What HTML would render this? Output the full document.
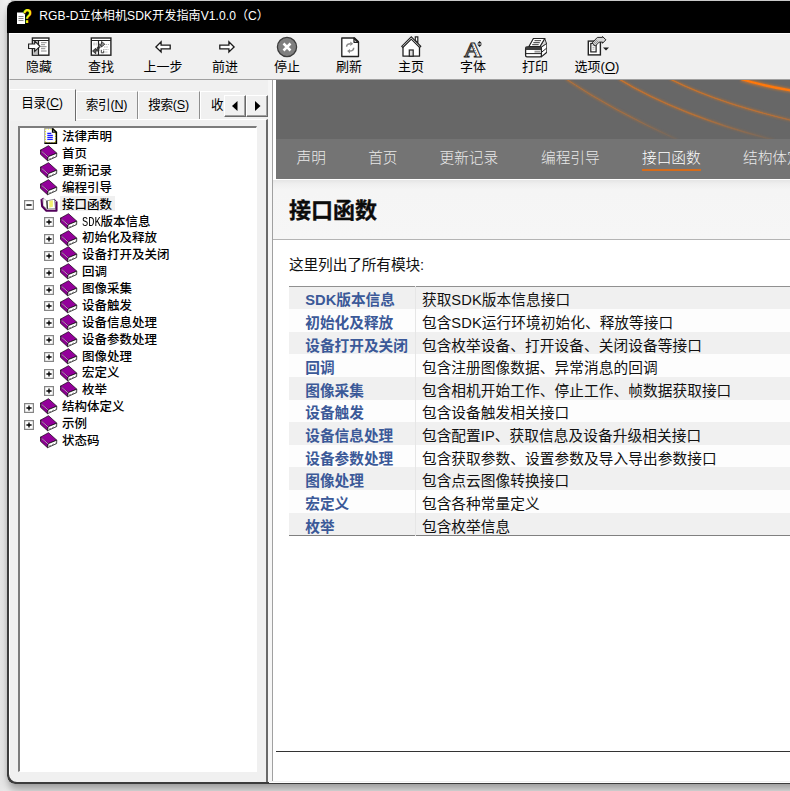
<!DOCTYPE html>
<html lang="zh-CN">
<head>
<meta charset="utf-8">
<title>RGB-D立体相机SDK开发指南V1.0.0 (C)</title>
<style>
*{box-sizing:border-box;margin:0;padding:0}
html,body{width:790px;height:791px;overflow:hidden;background:#f6f6f6}
body{position:relative;font-family:"Liberation Sans","Noto Sans CJK SC",sans-serif;font-size:12px;color:#000}
#bg{position:absolute;left:0;top:0;width:790px;height:791px;background:linear-gradient(90deg,#e7e7e7,#f0f0f0 7px,#f0f0f0)}
#win{position:absolute;left:7px;top:1px;width:800px;height:782.500px;background:#f0f0f0;border-radius:8px 8px 8px 8px;overflow:hidden}
#inner{position:absolute;left:2px;top:1px;width:798px;height:779px}
#bredge{position:absolute;left:262px;top:780.500px;width:540px;height:1px;background:#fff;z-index:21}
#toprow{position:absolute;left:11px;top:0;width:779px;height:1px;background:#c9c9c9}
#edge{position:absolute;left:0;top:32px;width:800px;height:750.500px;border-radius:0 0 0 8px;box-shadow:inset 2px -2px 0 0 #3c3c3c;z-index:20;pointer-events:none}
#wsh{position:absolute;left:7px;top:1px;width:800px;height:782px;border-radius:8px;box-shadow:0 8px 10px -1px rgba(0,0,0,.34),0 0 4px 0 rgba(0,0,0,.10)}
#title{position:absolute;left:-2px;top:-1px;width:801px;height:32px;background:#000;color:#fff}
#title .txt{position:absolute;left:32.3px;top:0;height:32px;line-height:31px;font-size:12.1px;white-space:nowrap;letter-spacing:.05px}
#title svg{position:absolute;left:9px;top:6px;width:17px;height:18px}
#toolbar{position:absolute;left:0;top:31px;width:800px;height:47px;background:#f0f0f0;border-top:1px solid #fff;border-left:1px solid #fff;border-bottom:1px solid #a0a0a0}
.tb{position:absolute;top:0;width:62px;height:46px;text-align:center}
.tb svg{position:absolute;left:19px;top:.7px;width:24px;height:24px}
.tb span{position:absolute;left:-10px;right:-10px;top:24px;height:18px;line-height:18px;font-size:13px;white-space:nowrap;color:#000}
u{text-decoration:underline;text-underline-offset:1.5px;text-decoration-thickness:1px}
/* left pane */
#left{position:absolute;left:0;top:78px;width:259px;height:701px;background:#f0f0f0;border-left:1px solid #fff}
.tab{position:absolute;top:11px;height:28px;line-height:27px;font-size:12.600px;letter-spacing:-.25px;text-align:center;border-top:1px solid #fff;border-right:1px solid #8e8e8e;white-space:nowrap;background:#f0f0f0;box-shadow:inset 1px 0 0 #fff}
.tab.sel{top:8.500px;height:32px;line-height:27px;background:#f2f2f2;z-index:2;border-right:1px solid #6c6c6c}
#tabpane{position:absolute;left:-1px;top:39px;width:259px;height:664px;border-top:1px solid #fff;border-right:2px solid #6a6a6a}
#tree{position:absolute;left:8px;top:46px;width:239px;height:646px;background:#fff;border-right:1px solid #fff;border-bottom:1px solid #fff;border-top:2px solid #7c7c7c;border-left:2px solid #7c7c7c;overflow:hidden}
.row{position:absolute;left:0;height:17px;line-height:17px;font-size:12.5px;white-space:nowrap;color:#000;font-weight:500}
.ti{position:absolute;width:18px;height:17px}
.ti svg{width:18px;height:17px;display:block}
.bx{position:absolute;width:10px;height:10px}
.selbg{position:absolute;width:55px;height:15.600px;background:#f0f0f0}
.mono{font-family:"Liberation Mono",monospace;font-size:13px;display:inline-block;transform:scaleX(.8);transform-origin:0 50%;margin-right:-4.900px;line-height:17px;vertical-align:top}
#spin{position:absolute;left:214px;top:15px;width:44px;height:22px;z-index:3}
.sb{position:absolute;top:0;width:22px;height:22px;background:#f0f0f0;border-top:1px solid #fff;border-left:1px solid #fff;border-right:1px solid #696969;border-bottom:1px solid #696969;box-shadow:inset -1px -1px 0 #a0a0a0}
.sb svg{width:20px;height:20px;display:block}
/* right pane */
#split{position:absolute;left:259px;top:78px;width:5px;height:701px;background:#f6f6f6;border-right:1px solid #a0a0a0}
#right{position:absolute;left:264px;top:78px;width:540px;height:701px;background:#fff;overflow:hidden}
#doc{position:absolute;left:3px;top:0;width:531px;height:703px}
#banner{position:absolute;left:0;top:0;width:531px;height:60px;background:#676767}
#nav{position:absolute;left:0;top:59px;width:531px;height:40px;background:#747474}
#nav span{position:absolute;top:1px;height:39px;line-height:37px;font-size:14.67px;color:#e9e9e9;font-weight:300;white-space:nowrap}
#nav span.act{color:#fff}
#nav span.act:after{content:"";position:absolute;left:0;right:0;top:29px;height:2px;background:#d56c1c}
#hd{position:absolute;left:-3px;top:99px;width:534px;height:61.300px;background:linear-gradient(#fff,#fff 1px,#e6e6e6 1.500px,#efefef 5px,#f5f5f5 11px,#f6f6f6);border-bottom:1px solid #b4b4b4}
#hd h1{position:absolute;left:16px;top:15.300px;font-size:22px;font-weight:bold;line-height:34px;white-space:nowrap;color:#0c0c0c;-webkit-text-stroke:.35px #0c0c0c}
#intro{position:absolute;left:13px;top:175px;font-size:14.67px;line-height:20px;white-space:nowrap;color:#111;letter-spacing:-.1px}
table{position:absolute;left:13px;top:205.500px;width:540px;border-collapse:collapse;border-top:1.500px solid #909090;border-bottom:1px solid #808080;font-size:14.67px}
td{height:22.64px;line-height:16.800px;padding:5.800px 0 0 0;white-space:nowrap;color:#111;vertical-align:top}
tr:nth-child(odd) td{background:#f0f0f0}
tr:nth-child(even) td{background:#fdfdfd}
td.k{width:126px;padding-left:16.300px;font-weight:bold;color:#3b5998;border-right:1px solid #e6e6e6}
td.v{padding-left:6.400px;letter-spacing:.08px}
#foot{position:absolute;left:0;top:671px;width:531px;height:1px;background:#333}
</style>
</head>
<body>
<div id="bg"></div>
<div id="wsh"></div><div id="toprow"></div>
<div id="win"><div id="inner">
 <div id="title"><svg viewBox="0 0 17 18"><path d="M1 5.500h6l2 2V17H1z" fill="#fff"/><path d="M2.500 9.500h5M2.500 11.500h5M2.500 13.500h5" stroke="#888" stroke-width="1"/><text x="11.300" y="16.200" text-anchor="middle" font-family="Liberation Sans,sans-serif" font-weight="bold" font-size="20" fill="#f5ee10" textLength="9.500" lengthAdjust="spacingAndGlyphs">?</text></svg><span class="txt">RGB-D立体相机SDK开发指南V1.0.0（C）</span></div>
 <div id="toolbar">
<div class="tb" style="left:-2px"><svg viewBox="0 0 24 24"><rect x="5.400" y="3" width="16.500" height="17.200" fill="#fff" stroke="#222" stroke-width="1.400"/><path d="M5.400 5.500h16.500" stroke="#222" stroke-width="1.100"/><rect x="6.200" y="6.200" width="4.800" height="13.300" fill="#bdbdbd"/><line x1="11.500" y1="5.500" x2="11.500" y2="20" stroke="#222" stroke-width="1.200"/><path d="M14 7.700h5.600M14 9.700h4M14 11.700h5.600M14 13.700h4.300M14 16h5.600" stroke="#8a8a8a" stroke-width="1"/><path d="M1.600 9h6.100V6.200l5.300 5.100 -5.300 5.200v-3H1.600z" fill="#fff" stroke="#222" stroke-width="1.150" stroke-linejoin="miter"/></svg><span>隐藏</span></div>
<div class="tb" style="left:60px"><svg viewBox="0 0 24 24"><rect x="2.300" y="3" width="19.600" height="17.200" fill="#fff" stroke="#222" stroke-width="1.400"/><path d="M2.300 5.500h19.600" stroke="#222" stroke-width="1.100"/><line x1="9.500" y1="5.500" x2="9.500" y2="20" stroke="#222" stroke-width="1.200"/><path d="M4.300 8.200h3.500M4.300 9.800h3.500M16.500 9.500h3.500M15 12h4.500M14 14.500h5.500M14 17h5" stroke="#b4b4b4" stroke-width="1" stroke-dasharray="1.500 .8"/><path d="M9.500 13V9.200h3V6.400l3.300 2.800-3.300 2.800v-1.300H11V13z" fill="#8c8c8c" stroke="#222" stroke-width=".8" stroke-linejoin="round"/><path d="M9.500 13v3.800h-3v2.800L3.200 16.800l3.300-2.800v1.300H8V13z" fill="#555" stroke="#222" stroke-width=".8" stroke-linejoin="round" transform="translate(.3 -.8)"/><path d="M12.300 14.800v3h2.400v-2.200" stroke="#444" stroke-width="1" fill="none"/></svg><span>查找</span></div>
<div class="tb" style="left:122px"><svg viewBox="0 0 24 24"><path d="M4.900 11.950l5.200-5.100v3.200h9.100v3.800h-9.100v3.200z" fill="#fff" stroke="#1c1c1c" stroke-width="1.300" stroke-linejoin="miter"/></svg><span>上一步</span></div>
<div class="tb" style="left:184px"><svg viewBox="0 0 24 24"><path d="M21.100 11.950l-5.200-5.100v3.200H6.800v3.800h9.100v3.200z" fill="#fff" stroke="#1c1c1c" stroke-width="1.300" stroke-linejoin="miter"/></svg><span>前进</span></div>
<div class="tb" style="left:246px"><svg viewBox="0 0 24 24"><circle cx="12" cy="12" r="9.600" fill="#7f7f7f" stroke="#3c3c3c" stroke-width="1.300"/><path d="M8.500 8.500l7 7M15.500 8.500l-7 7" stroke="#fff" stroke-width="2.500" stroke-linecap="butt"/></svg><span>停止</span></div>
<div class="tb" style="left:308px"><svg viewBox="0 0 24 24"><path d="M4.800 3h12.300l4.400 4.200v14.300H4.800z" fill="#fff" stroke="#222" stroke-width="1.350" stroke-linejoin="round"/><path d="M17 3v4.300h4.500z" fill="#fff" stroke="#222" stroke-width="1.300" stroke-linejoin="round"/><path d="M17 3l4.500 4.300" stroke="#222" stroke-width="2"/><path d="M9.600 11.800c0-2.200 1.600-3.200 4-3.100" fill="none" stroke="#8a8a8a" stroke-width="1.500"/><path d="M13.300 6.400l2.900 2.300-2.900 2.200z" fill="#8a8a8a"/><path d="M16.700 12.800c0 2.200-1.600 3.300-4 3.300" fill="none" stroke="#8a8a8a" stroke-width="1.500"/><path d="M13 18.400l-2.900-2.300 2.900-2.200z" fill="#8a8a8a"/></svg><span>刷新</span></div>
<div class="tb" style="left:370px"><svg viewBox="0 0 24 24"><path d="M16.300 5.500V1.900h2.500v6z" fill="#fff" stroke="#222" stroke-width="1.200"/><path d="M4 11.800v9.400h16.500v-9.400l-8.250-8.200z" fill="#fff" stroke="#222" stroke-width="1.300" stroke-linejoin="round"/><path d="M2.700 11.300l9.550-9.500 9.550 9.500-1.200 1.200-8.350-8.300-8.350 8.300z" fill="#fff" stroke="#222" stroke-width="1.100" stroke-linejoin="miter"/><rect x="10.300" y="15" width="3.900" height="6.200" fill="#ddd" stroke="#222" stroke-width="1.200"/></svg><span>主页</span></div>
<div class="tb" style="left:432px"><svg viewBox="0 0 24 24"><text x="11.800" y="21.600" text-anchor="middle" font-family="Liberation Serif,serif" font-weight="bold" font-size="21" fill="#fff" stroke="#222" stroke-width=".9" textLength="17.500" lengthAdjust="spacingAndGlyphs">A</text><path d="M11.700 9.500l-5 11M11.700 9.500l5 11" stroke="#555" stroke-width=".8" stroke-dasharray="1 1" fill="none"/><path d="M18.600 6.100l-2.400 2.400h4.800zM18.600 12l-2.400-2.400h4.800z" fill="#1c1c1c"/></svg><span>字体</span></div>
<div class="tb" style="left:494px"><svg viewBox="0 0 24 24"><path d="M18.300 12l4.600-3.600c.6-.3 1 .2 1 .8v7.300c0 .5-.2.900-.6 1.200l-5 4.200z" fill="#fff" stroke="#222" stroke-width="1.200" stroke-linejoin="round"/><path d="M18.500 17.300l5.200-4.200" stroke="#222" stroke-width="1"/><path d="M17 11.500l4.800-8 1.700 5.100-5 3.400z" fill="#d8d8d8" stroke="#222" stroke-width=".9" stroke-linejoin="round"/><path d="M10.400 3.500h11.400l-4.800 8H5.900z" fill="#fff" stroke="#222" stroke-width="1.200" stroke-linejoin="round"/><path d="M11.500 5.700h6.500M10.300 7.700h6.500M9.200 9.700h6.500" stroke="#333" stroke-width="1"/><rect x="2.600" y="12" width="15.800" height="9.900" rx="1.400" fill="#fff" stroke="#222" stroke-width="1.300"/><path d="M2.600 13.500c0-1 .5-1.500 1.400-1.500h13c.9 0 1.400.5 1.400 1.500v1.600H2.600z" fill="#3c3c3c"/><path d="M3 18.600h15" stroke="#222" stroke-width="1"/><rect x="11.500" y="15.700" width="5.500" height="1.900" fill="#9a9a9a"/></svg><span>打印</span></div>
<div class="tb" style="left:556px"><svg viewBox="0 0 24 24"><rect x="3.300" y="6.100" width="12.100" height="13.800" fill="#fff" stroke="#222" stroke-width="1.400"/><rect x="5.800" y="8.500" width="5.300" height="8.400" fill="#fff" stroke="#222" stroke-width="1.200"/><path d="M7.500 10.500h2M7.500 12.300h2M7.500 14.100h2" stroke="#aaa" stroke-width="1"/><path d="M7.200 7.900L12.300 2.400h5.200V1.500l3.400 3.300-3.400 3.500V7.100h-3.300L10.200 11.100z" fill="#d6d6d6" stroke="#222" stroke-width="1"/><path d="M8.500 8.500l3.500-3.700M9.700 9.500l3.500-3.700M10.800 10.300l3.300-3.500" stroke="#666" stroke-width=".6"/><path d="M18 12.600h6l-3 3z" fill="#1c1c1c"/></svg><span>选项(<u>O</u>)</span></div>
</div>
 <div id="left">
<div class="tab sel" style="left:-1px;width:67px"><span>目录(<u>C</u>)</span></div>
<div class="tab" style="left:66px;width:62px">索引(<u>N</u>)</div>
<div class="tab" style="left:128px;width:62px">搜索(<u>S</u>)</div>
<div class="tab" style="left:190px;width:40px;text-align:left;padding-left:11px;border-right:none">收</div>
<div id="spin"><div class="sb" style="left:0"><svg viewBox="0 0 20 20"><path d="M12.500 5v10L7 10z" fill="#000"/></svg></div><div class="sb" style="left:22px"><svg viewBox="0 0 20 20"><path d="M8 5v10l5.500-5z" fill="#000"/></svg></div></div>
<div id="tabpane"></div>
<div id="tree">
<div class="ti" style="left:20px;top:0.2px"><svg viewBox="0 0 18 17"><path d="M4.700 .3h7.800l4 4v11.200H4.700z" fill="#fff"/><path d="M5.200 .8h7.500l3 3.200V15H5.200z" fill="none" stroke="#f2f000" stroke-width="1.600" stroke-dasharray="1.300 1.300"/><path d="M4.700 15.500V.3h7.800" fill="none" stroke="#9a9ab8" stroke-width="1"/><path d="M12.500 .3v3.900h3.900" fill="#fff" stroke="#000" stroke-width="1.200"/><path d="M12.500 .6l3.900 3.700v10.900H4.400" fill="none" stroke="#000" stroke-width="1.500"/><path d="M7.300 5.300h4M7.300 7.300h5.500M7.300 9.400h5.500M7.300 11.400h5.500" stroke="#1a1aff" stroke-width="1.200"/></svg></div><div class="row" style="left:42px;top:1.1px">法律声明</div>
<div class="ti" style="left:20px;top:17.1px"><svg viewBox="0 0 18 17"><path d="M.4 5.200L8.500.700l8.300 7.500-8.600 3.500z" fill="#93009a" stroke="#1a001a" stroke-width=".75"/><path d="M.4 5.200l.1 4.100 7 6.400.7-4z" fill="#8a0090" stroke="#1a001a" stroke-width=".75"/><path d="M8.200 11.700l8.600-3.500-.2 3.400-9.100 4.100z" fill="#fff" stroke="#111" stroke-width=".8"/><path d="M9 14.200l7-3.200" stroke="#555" stroke-width=".7" stroke-dasharray="2 1.500"/><path d="M1.600 6.300l6.600 5.600" stroke="#d4a0d4" stroke-width=".9"/></svg></div><div class="row" style="left:42px;top:18.0px">首页</div>
<div class="ti" style="left:20px;top:34.0px"><svg viewBox="0 0 18 17"><path d="M.4 5.200L8.500.700l8.300 7.500-8.600 3.500z" fill="#93009a" stroke="#1a001a" stroke-width=".75"/><path d="M.4 5.200l.1 4.100 7 6.400.7-4z" fill="#8a0090" stroke="#1a001a" stroke-width=".75"/><path d="M8.200 11.700l8.600-3.500-.2 3.400-9.100 4.100z" fill="#fff" stroke="#111" stroke-width=".8"/><path d="M9 14.200l7-3.200" stroke="#555" stroke-width=".7" stroke-dasharray="2 1.500"/><path d="M1.600 6.300l6.600 5.600" stroke="#d4a0d4" stroke-width=".9"/></svg></div><div class="row" style="left:42px;top:34.9px">更新记录</div>
<div class="ti" style="left:20px;top:50.8px"><svg viewBox="0 0 18 17"><path d="M.4 5.200L8.500.700l8.300 7.500-8.600 3.500z" fill="#93009a" stroke="#1a001a" stroke-width=".75"/><path d="M.4 5.200l.1 4.100 7 6.400.7-4z" fill="#8a0090" stroke="#1a001a" stroke-width=".75"/><path d="M8.200 11.700l8.600-3.500-.2 3.400-9.100 4.100z" fill="#fff" stroke="#111" stroke-width=".8"/><path d="M9 14.200l7-3.200" stroke="#555" stroke-width=".7" stroke-dasharray="2 1.500"/><path d="M1.600 6.300l6.600 5.600" stroke="#d4a0d4" stroke-width=".9"/></svg></div><div class="row" style="left:42px;top:51.7px">编程引导</div>
<svg class="bx" style="left:4px;top:72.1px" viewBox="0 0 10 10"><rect x=".6" y=".6" width="8.800" height="8.800" fill="#fff" stroke="#858585" stroke-width="1.250"/><path d="M2.400 5h5.200" stroke="#000" stroke-width="1.350"/></svg><div class="ti" style="left:20px;top:67.7px"><svg viewBox="0 0 18 17"><path d="M3.500 2.300l3.300 2.600.6 7.900-4.400-3z" fill="#fff" stroke="#999" stroke-width=".6"/><path d="M7 4.800L14.400 3.300l1.100 9.400-8.100.2z" fill="#fff" stroke="#777" stroke-width=".8"/><path d="M9.300 4.900l3.600-.7v6.500l-3.600 1.100z" fill="#f3f070"/><path d="M6.900 4.800l.5 8" stroke="#222" stroke-width="1.100"/><path d="M1.500 3.100l.6 7.100 4.300 4.500h10.100V5.500" fill="none" stroke="#52005a" stroke-width="2.100" stroke-linejoin="round"/><path d="M3.500 2.300l-2 .8M14.400 3.300l2.300 2.200" stroke="#52005a" stroke-width="1"/></svg></div><div class="selbg" style="left:40px;top:67.9px"></div><div class="row" style="left:42px;top:68.6px">接口函数</div>
<svg class="bx" style="left:24px;top:89.0px" viewBox="0 0 10 10"><rect x=".6" y=".6" width="8.800" height="8.800" fill="#fff" stroke="#858585" stroke-width="1.250"/><path d="M2.400 5h5.200M5 2.400v5.200" stroke="#000" stroke-width="1.350"/></svg><div class="ti" style="left:40px;top:84.6px"><svg viewBox="0 0 18 17"><path d="M.4 5.200L8.500.700l8.300 7.500-8.600 3.500z" fill="#93009a" stroke="#1a001a" stroke-width=".75"/><path d="M.4 5.200l.1 4.100 7 6.400.7-4z" fill="#8a0090" stroke="#1a001a" stroke-width=".75"/><path d="M8.200 11.700l8.600-3.500-.2 3.400-9.100 4.100z" fill="#fff" stroke="#111" stroke-width=".8"/><path d="M9 14.200l7-3.200" stroke="#555" stroke-width=".7" stroke-dasharray="2 1.500"/><path d="M1.600 6.300l6.600 5.600" stroke="#d4a0d4" stroke-width=".9"/></svg></div><div class="row" style="left:62px;top:85.5px"><span class="mono">SDK</span>版本信息</div>
<svg class="bx" style="left:24px;top:105.9px" viewBox="0 0 10 10"><rect x=".6" y=".6" width="8.800" height="8.800" fill="#fff" stroke="#858585" stroke-width="1.250"/><path d="M2.400 5h5.200M5 2.400v5.200" stroke="#000" stroke-width="1.350"/></svg><div class="ti" style="left:40px;top:101.5px"><svg viewBox="0 0 18 17"><path d="M.4 5.200L8.500.700l8.300 7.500-8.600 3.500z" fill="#93009a" stroke="#1a001a" stroke-width=".75"/><path d="M.4 5.200l.1 4.100 7 6.400.7-4z" fill="#8a0090" stroke="#1a001a" stroke-width=".75"/><path d="M8.200 11.700l8.600-3.500-.2 3.400-9.100 4.100z" fill="#fff" stroke="#111" stroke-width=".8"/><path d="M9 14.200l7-3.200" stroke="#555" stroke-width=".7" stroke-dasharray="2 1.500"/><path d="M1.600 6.300l6.600 5.600" stroke="#d4a0d4" stroke-width=".9"/></svg></div><div class="row" style="left:62px;top:102.4px">初始化及释放</div>
<svg class="bx" style="left:24px;top:122.8px" viewBox="0 0 10 10"><rect x=".6" y=".6" width="8.800" height="8.800" fill="#fff" stroke="#858585" stroke-width="1.250"/><path d="M2.400 5h5.200M5 2.400v5.200" stroke="#000" stroke-width="1.350"/></svg><div class="ti" style="left:40px;top:118.4px"><svg viewBox="0 0 18 17"><path d="M.4 5.200L8.500.700l8.300 7.500-8.600 3.500z" fill="#93009a" stroke="#1a001a" stroke-width=".75"/><path d="M.4 5.200l.1 4.100 7 6.400.7-4z" fill="#8a0090" stroke="#1a001a" stroke-width=".75"/><path d="M8.200 11.700l8.600-3.500-.2 3.400-9.100 4.100z" fill="#fff" stroke="#111" stroke-width=".8"/><path d="M9 14.200l7-3.200" stroke="#555" stroke-width=".7" stroke-dasharray="2 1.500"/><path d="M1.600 6.300l6.600 5.600" stroke="#d4a0d4" stroke-width=".9"/></svg></div><div class="row" style="left:62px;top:119.3px">设备打开及关闭</div>
<svg class="bx" style="left:24px;top:139.6px" viewBox="0 0 10 10"><rect x=".6" y=".6" width="8.800" height="8.800" fill="#fff" stroke="#858585" stroke-width="1.250"/><path d="M2.400 5h5.200M5 2.400v5.200" stroke="#000" stroke-width="1.350"/></svg><div class="ti" style="left:40px;top:135.2px"><svg viewBox="0 0 18 17"><path d="M.4 5.200L8.500.700l8.300 7.500-8.600 3.500z" fill="#93009a" stroke="#1a001a" stroke-width=".75"/><path d="M.4 5.200l.1 4.100 7 6.400.7-4z" fill="#8a0090" stroke="#1a001a" stroke-width=".75"/><path d="M8.200 11.700l8.600-3.500-.2 3.400-9.100 4.100z" fill="#fff" stroke="#111" stroke-width=".8"/><path d="M9 14.200l7-3.200" stroke="#555" stroke-width=".7" stroke-dasharray="2 1.500"/><path d="M1.600 6.300l6.600 5.600" stroke="#d4a0d4" stroke-width=".9"/></svg></div><div class="row" style="left:62px;top:136.1px">回调</div>
<svg class="bx" style="left:24px;top:156.5px" viewBox="0 0 10 10"><rect x=".6" y=".6" width="8.800" height="8.800" fill="#fff" stroke="#858585" stroke-width="1.250"/><path d="M2.400 5h5.200M5 2.400v5.200" stroke="#000" stroke-width="1.350"/></svg><div class="ti" style="left:40px;top:152.1px"><svg viewBox="0 0 18 17"><path d="M.4 5.200L8.500.700l8.300 7.500-8.600 3.500z" fill="#93009a" stroke="#1a001a" stroke-width=".75"/><path d="M.4 5.200l.1 4.100 7 6.400.7-4z" fill="#8a0090" stroke="#1a001a" stroke-width=".75"/><path d="M8.200 11.700l8.600-3.500-.2 3.400-9.100 4.100z" fill="#fff" stroke="#111" stroke-width=".8"/><path d="M9 14.200l7-3.200" stroke="#555" stroke-width=".7" stroke-dasharray="2 1.500"/><path d="M1.600 6.300l6.600 5.600" stroke="#d4a0d4" stroke-width=".9"/></svg></div><div class="row" style="left:62px;top:153.0px">图像采集</div>
<svg class="bx" style="left:24px;top:173.4px" viewBox="0 0 10 10"><rect x=".6" y=".6" width="8.800" height="8.800" fill="#fff" stroke="#858585" stroke-width="1.250"/><path d="M2.400 5h5.200M5 2.400v5.200" stroke="#000" stroke-width="1.350"/></svg><div class="ti" style="left:40px;top:169.0px"><svg viewBox="0 0 18 17"><path d="M.4 5.200L8.500.700l8.300 7.500-8.600 3.500z" fill="#93009a" stroke="#1a001a" stroke-width=".75"/><path d="M.4 5.200l.1 4.100 7 6.400.7-4z" fill="#8a0090" stroke="#1a001a" stroke-width=".75"/><path d="M8.200 11.700l8.600-3.500-.2 3.400-9.100 4.100z" fill="#fff" stroke="#111" stroke-width=".8"/><path d="M9 14.200l7-3.200" stroke="#555" stroke-width=".7" stroke-dasharray="2 1.500"/><path d="M1.600 6.300l6.600 5.600" stroke="#d4a0d4" stroke-width=".9"/></svg></div><div class="row" style="left:62px;top:169.9px">设备触发</div>
<svg class="bx" style="left:24px;top:190.3px" viewBox="0 0 10 10"><rect x=".6" y=".6" width="8.800" height="8.800" fill="#fff" stroke="#858585" stroke-width="1.250"/><path d="M2.400 5h5.200M5 2.400v5.200" stroke="#000" stroke-width="1.350"/></svg><div class="ti" style="left:40px;top:185.9px"><svg viewBox="0 0 18 17"><path d="M.4 5.200L8.500.700l8.300 7.500-8.600 3.500z" fill="#93009a" stroke="#1a001a" stroke-width=".75"/><path d="M.4 5.200l.1 4.100 7 6.400.7-4z" fill="#8a0090" stroke="#1a001a" stroke-width=".75"/><path d="M8.200 11.700l8.600-3.500-.2 3.400-9.100 4.100z" fill="#fff" stroke="#111" stroke-width=".8"/><path d="M9 14.200l7-3.200" stroke="#555" stroke-width=".7" stroke-dasharray="2 1.500"/><path d="M1.600 6.300l6.600 5.600" stroke="#d4a0d4" stroke-width=".9"/></svg></div><div class="row" style="left:62px;top:186.8px">设备信息处理</div>
<svg class="bx" style="left:24px;top:207.2px" viewBox="0 0 10 10"><rect x=".6" y=".6" width="8.800" height="8.800" fill="#fff" stroke="#858585" stroke-width="1.250"/><path d="M2.400 5h5.200M5 2.400v5.200" stroke="#000" stroke-width="1.350"/></svg><div class="ti" style="left:40px;top:202.8px"><svg viewBox="0 0 18 17"><path d="M.4 5.200L8.500.700l8.300 7.500-8.600 3.500z" fill="#93009a" stroke="#1a001a" stroke-width=".75"/><path d="M.4 5.200l.1 4.100 7 6.400.7-4z" fill="#8a0090" stroke="#1a001a" stroke-width=".75"/><path d="M8.200 11.700l8.600-3.500-.2 3.400-9.100 4.100z" fill="#fff" stroke="#111" stroke-width=".8"/><path d="M9 14.200l7-3.200" stroke="#555" stroke-width=".7" stroke-dasharray="2 1.500"/><path d="M1.600 6.300l6.600 5.600" stroke="#d4a0d4" stroke-width=".9"/></svg></div><div class="row" style="left:62px;top:203.7px">设备参数处理</div>
<svg class="bx" style="left:24px;top:224.0px" viewBox="0 0 10 10"><rect x=".6" y=".6" width="8.800" height="8.800" fill="#fff" stroke="#858585" stroke-width="1.250"/><path d="M2.400 5h5.200M5 2.400v5.200" stroke="#000" stroke-width="1.350"/></svg><div class="ti" style="left:40px;top:219.6px"><svg viewBox="0 0 18 17"><path d="M.4 5.200L8.500.700l8.300 7.500-8.600 3.500z" fill="#93009a" stroke="#1a001a" stroke-width=".75"/><path d="M.4 5.200l.1 4.100 7 6.400.7-4z" fill="#8a0090" stroke="#1a001a" stroke-width=".75"/><path d="M8.200 11.700l8.600-3.500-.2 3.400-9.100 4.100z" fill="#fff" stroke="#111" stroke-width=".8"/><path d="M9 14.200l7-3.200" stroke="#555" stroke-width=".7" stroke-dasharray="2 1.500"/><path d="M1.600 6.300l6.600 5.600" stroke="#d4a0d4" stroke-width=".9"/></svg></div><div class="row" style="left:62px;top:220.5px">图像处理</div>
<svg class="bx" style="left:24px;top:240.9px" viewBox="0 0 10 10"><rect x=".6" y=".6" width="8.800" height="8.800" fill="#fff" stroke="#858585" stroke-width="1.250"/><path d="M2.400 5h5.200M5 2.400v5.200" stroke="#000" stroke-width="1.350"/></svg><div class="ti" style="left:40px;top:236.5px"><svg viewBox="0 0 18 17"><path d="M.4 5.200L8.500.700l8.300 7.500-8.600 3.500z" fill="#93009a" stroke="#1a001a" stroke-width=".75"/><path d="M.4 5.200l.1 4.100 7 6.400.7-4z" fill="#8a0090" stroke="#1a001a" stroke-width=".75"/><path d="M8.200 11.700l8.600-3.500-.2 3.400-9.100 4.100z" fill="#fff" stroke="#111" stroke-width=".8"/><path d="M9 14.200l7-3.200" stroke="#555" stroke-width=".7" stroke-dasharray="2 1.500"/><path d="M1.600 6.300l6.600 5.600" stroke="#d4a0d4" stroke-width=".9"/></svg></div><div class="row" style="left:62px;top:237.4px">宏定义</div>
<svg class="bx" style="left:24px;top:257.8px" viewBox="0 0 10 10"><rect x=".6" y=".6" width="8.800" height="8.800" fill="#fff" stroke="#858585" stroke-width="1.250"/><path d="M2.400 5h5.200M5 2.400v5.200" stroke="#000" stroke-width="1.350"/></svg><div class="ti" style="left:40px;top:253.4px"><svg viewBox="0 0 18 17"><path d="M.4 5.200L8.500.700l8.300 7.500-8.600 3.500z" fill="#93009a" stroke="#1a001a" stroke-width=".75"/><path d="M.4 5.200l.1 4.100 7 6.400.7-4z" fill="#8a0090" stroke="#1a001a" stroke-width=".75"/><path d="M8.200 11.700l8.600-3.500-.2 3.400-9.100 4.100z" fill="#fff" stroke="#111" stroke-width=".8"/><path d="M9 14.200l7-3.200" stroke="#555" stroke-width=".7" stroke-dasharray="2 1.500"/><path d="M1.600 6.300l6.600 5.600" stroke="#d4a0d4" stroke-width=".9"/></svg></div><div class="row" style="left:62px;top:254.3px">枚举</div>
<svg class="bx" style="left:4px;top:274.7px" viewBox="0 0 10 10"><rect x=".6" y=".6" width="8.800" height="8.800" fill="#fff" stroke="#858585" stroke-width="1.250"/><path d="M2.400 5h5.200M5 2.400v5.200" stroke="#000" stroke-width="1.350"/></svg><div class="ti" style="left:20px;top:270.3px"><svg viewBox="0 0 18 17"><path d="M.4 5.200L8.500.700l8.300 7.500-8.600 3.500z" fill="#93009a" stroke="#1a001a" stroke-width=".75"/><path d="M.4 5.200l.1 4.100 7 6.400.7-4z" fill="#8a0090" stroke="#1a001a" stroke-width=".75"/><path d="M8.200 11.700l8.600-3.500-.2 3.400-9.100 4.100z" fill="#fff" stroke="#111" stroke-width=".8"/><path d="M9 14.200l7-3.200" stroke="#555" stroke-width=".7" stroke-dasharray="2 1.500"/><path d="M1.600 6.300l6.600 5.600" stroke="#d4a0d4" stroke-width=".9"/></svg></div><div class="row" style="left:42px;top:271.2px">结构体定义</div>
<svg class="bx" style="left:4px;top:291.6px" viewBox="0 0 10 10"><rect x=".6" y=".6" width="8.800" height="8.800" fill="#fff" stroke="#858585" stroke-width="1.250"/><path d="M2.400 5h5.200M5 2.400v5.200" stroke="#000" stroke-width="1.350"/></svg><div class="ti" style="left:20px;top:287.2px"><svg viewBox="0 0 18 17"><path d="M.4 5.200L8.500.700l8.300 7.500-8.600 3.500z" fill="#93009a" stroke="#1a001a" stroke-width=".75"/><path d="M.4 5.200l.1 4.100 7 6.400.7-4z" fill="#8a0090" stroke="#1a001a" stroke-width=".75"/><path d="M8.200 11.700l8.600-3.500-.2 3.400-9.100 4.100z" fill="#fff" stroke="#111" stroke-width=".8"/><path d="M9 14.200l7-3.200" stroke="#555" stroke-width=".7" stroke-dasharray="2 1.500"/><path d="M1.600 6.300l6.600 5.600" stroke="#d4a0d4" stroke-width=".9"/></svg></div><div class="row" style="left:42px;top:288.1px">示例</div>
<div class="ti" style="left:20px;top:304.0px"><svg viewBox="0 0 18 17"><path d="M.4 5.200L8.500.700l8.300 7.500-8.600 3.500z" fill="#93009a" stroke="#1a001a" stroke-width=".75"/><path d="M.4 5.200l.1 4.100 7 6.400.7-4z" fill="#8a0090" stroke="#1a001a" stroke-width=".75"/><path d="M8.200 11.700l8.600-3.500-.2 3.400-9.100 4.100z" fill="#fff" stroke="#111" stroke-width=".8"/><path d="M9 14.200l7-3.200" stroke="#555" stroke-width=".7" stroke-dasharray="2 1.500"/><path d="M1.600 6.300l6.600 5.600" stroke="#d4a0d4" stroke-width=".9"/></svg></div><div class="row" style="left:42px;top:304.9px">状态码</div>
</div>
</div>
 <div id="split"></div>
 <div id="right"><div id="doc">
  <div id="banner"><svg width="531" height="60" viewBox="0 0 531 60"><defs><filter id="bl" x="-5%" y="-20%" width="110%" height="140%"><feGaussianBlur stdDeviation="1.1"/></filter><filter id="bl2" x="-5%" y="-20%" width="110%" height="140%"><feGaussianBlur stdDeviation=".5"/></filter>
<linearGradient id="fa" x1="0" y1="0" x2="0" y2="1"><stop offset="0" stop-color="#fff"/><stop offset=".6" stop-color="#fff" stop-opacity=".8"/><stop offset="1" stop-color="#fff" stop-opacity=".15"/></linearGradient><mask id="mk"><rect width="531" height="60" fill="url(#fa)"/></mask></defs>
<g mask="url(#mk)" fill="none">
<g filter="url(#bl)" stroke="#ff7a10"><path d="M290 -1Q336 30 402 60" stroke-opacity=".35" stroke-width="2.400"/><path d="M343 -1C380 22 440 46 498 60" stroke-opacity=".45" stroke-width="2.400"/><path d="M394 -1C430 17 470 30 531 44" stroke-opacity=".45" stroke-width="2.400"/></g>
<g filter="url(#bl2)" stroke="#f07818"><path d="M290 -1Q336 30 402 60" stroke-opacity=".4" stroke-width="1"/><path d="M343 -1C380 22 440 46 498 60" stroke-opacity=".6" stroke-width="1.100"/><path d="M394 -1C430 17 470 30 531 44" stroke-opacity=".65" stroke-width="1.100"/></g>
</g>
<path d="M465 -1Q490 7 531 13" fill="none" stroke="#ff7a10" stroke-opacity=".5" stroke-width="4.500" filter="url(#bl)"/>
<path d="M465 -1Q490 7 531 13" fill="none" stroke="#ff7808" stroke-width="2.200" filter="url(#bl2)"/>
</svg></div>
  <div id="nav"><span style="left:20.5px">声明</span><span style="left:92.19999999999999px">首页</span><span style="left:163.5px">更新记录</span><span style="left:265px">编程引导</span><span class="act" style="left:366px">接口函数</span><span style="left:467px">结构体定义</span></div>
  <div id="hd"><h1>接口函数</h1></div>
  <div id="intro">这里列出了所有模块:</div>
  <table><tr><td class="k">SDK版本信息</td><td class="v">获取SDK版本信息接口</td></tr>
<tr><td class="k">初始化及释放</td><td class="v">包含SDK运行环境初始化、释放等接口</td></tr>
<tr><td class="k">设备打开及关闭</td><td class="v">包含枚举设备、打开设备、关闭设备等接口</td></tr>
<tr><td class="k">回调</td><td class="v">包含注册图像数据、异常消息的回调</td></tr>
<tr><td class="k">图像采集</td><td class="v">包含相机开始工作、停止工作、帧数据获取接口</td></tr>
<tr><td class="k">设备触发</td><td class="v">包含设备触发相关接口</td></tr>
<tr><td class="k">设备信息处理</td><td class="v">包含配置IP、获取信息及设备升级相关接口</td></tr>
<tr><td class="k">设备参数处理</td><td class="v">包含获取参数、设置参数及导入导出参数接口</td></tr>
<tr><td class="k">图像处理</td><td class="v">包含点云图像转换接口</td></tr>
<tr><td class="k">宏定义</td><td class="v">包含各种常量定义</td></tr>
<tr><td class="k">枚举</td><td class="v">包含枚举信息</td></tr>
</table>
  <div id="foot"></div>
 </div></div>
</div><div id="edge"></div><div id="bredge"></div></div>
</body>
</html>
